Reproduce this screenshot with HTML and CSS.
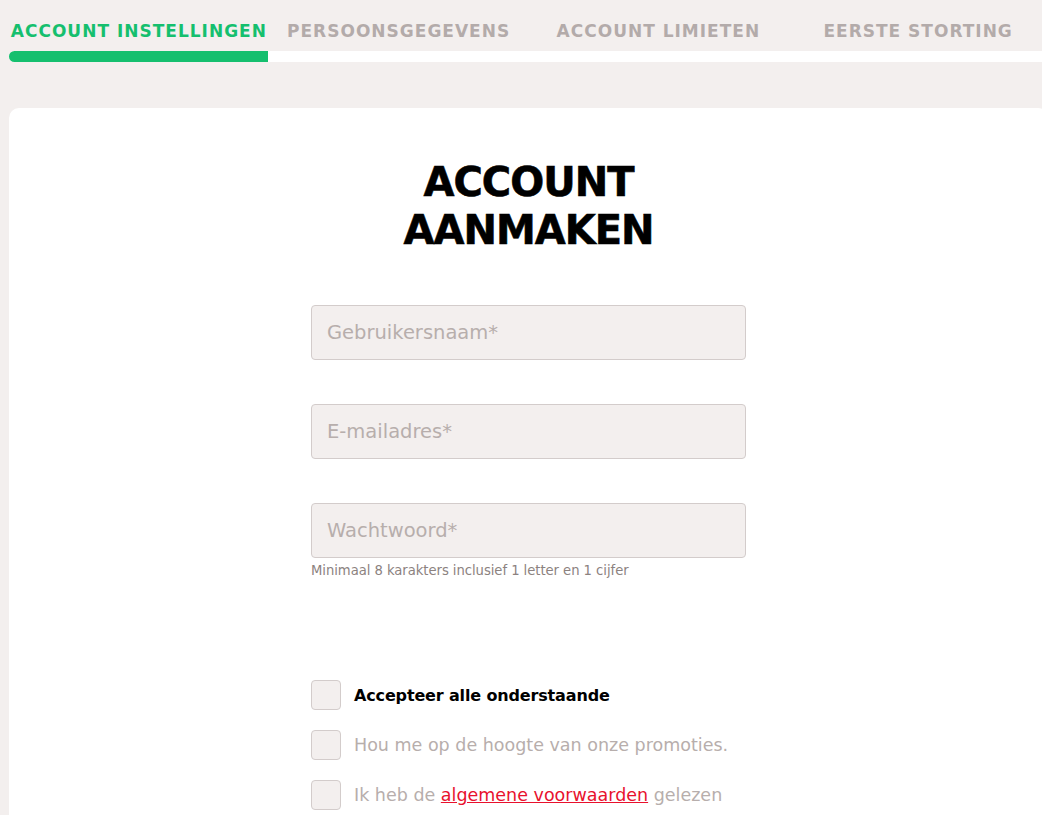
FILE: index.html
```html
<!DOCTYPE html>
<html lang="nl">
<head>
<meta charset="utf-8">
<title>Account aanmaken</title>
<link rel="stylesheet" href="styles.css">
</head>
<body>
<div class="wrap">
  <nav class="tabs">
    <div class="tab active">ACCOUNT INSTELLINGEN</div>
    <div class="tab">PERSOONSGEGEVENS</div>
    <div class="tab">ACCOUNT LIMIETEN</div>
    <div class="tab">EERSTE STORTING</div>
  </nav>
  <div class="progress"><div class="fill"></div></div>
  <main class="card">
    <h1 class="title">ACCOUNT<br>AANMAKEN</h1>
    <form class="form">
      <div class="field"><input class="input" type="text" placeholder="Gebruikersnaam*"></div>
      <div class="field"><input class="input" type="email" placeholder="E-mailadres*"></div>
      <div class="field">
        <input class="input" type="password" placeholder="Wachtwoord*">
        <div class="hint">Minimaal 8 karakters inclusief 1 letter en 1 cijfer</div>
      </div>
      <div class="checks">
        <label class="check"><span class="box"></span><span class="label strong">Accepteer alle onderstaande</span></label>
        <label class="check"><span class="box"></span><span class="label">Hou me op de hoogte van onze promoties.</span></label>
        <label class="check"><span class="box"></span><span class="label">Ik heb de <a class="link" href="#">algemene voorwaarden</a> gelezen</span></label>
      </div>
    </form>
  </main>
</div>
</body>
</html>
```
FILE: styles.css
```css
html, body {
  margin: 0;
  padding: 0;
}
body {
  background: #f3efee;
  font-family: "DejaVu Sans", "Liberation Sans", sans-serif;
  overflow: hidden;
  width: 1042px;
  height: 815px;
}
.wrap {
  margin-left: 9px;
  width: 1039px;
}
.tabs {
  display: grid;
  grid-template-columns: repeat(4, 1fr);
  height: 51px;
  align-items: center;
  padding-top: 10px;
  box-sizing: border-box;
}
.tab {
  text-align: center;
  font-weight: bold;
  font-size: 17px;
  letter-spacing: 1px;
  color: #b3abaa;
  white-space: nowrap;
}
.tab.active {
  color: #15bf6e;
}
.progress {
  height: 11px;
  background: #ffffff;
  border-radius: 6px 0 0 6px;
  overflow: hidden;
}
.fill {
  width: 259px;
  height: 100%;
  background: #15bf6e;
}
.card {
  margin-top: 46px;
  background: #ffffff;
  border-radius: 10px 10px 0 0;
  padding-top: 50px;
  height: 657px;
}
.title {
  margin: 0;
  text-align: center;
  font-size: 40px;
  line-height: 48px;
  font-weight: bold;
  letter-spacing: -1px;
  color: #000;
  -webkit-text-stroke: 0.6px #000;
}
.form {
  width: 435px;
  margin: 51px auto 0;
}
.field {
  margin-bottom: 44px;
}
.input {
  display: block;
  width: 100%;
  height: 55px;
  box-sizing: border-box;
  border: 1px solid #d3cccb;
  border-radius: 4px;
  background: #f3efee;
  padding: 0 15px;
  font-family: inherit;
  font-size: 19.5px;
  color: #333;
  outline: none;
}
.input::placeholder {
  color: #b7aeac;
}
.hint {
  margin-top: 5px;
  font-size: 13.2px;
  letter-spacing: -0.05px;
  color: #8c8280;
}
.field:nth-child(3) {
  margin-bottom: 0;
}
.checks {
  margin-top: 102px;
  display: flex;
  flex-direction: column;
  gap: 20px;
}
.check {
  display: flex;
  align-items: center;
  gap: 13px;
}
.box {
  width: 30px;
  height: 30px;
  box-sizing: border-box;
  border: 1px solid #d3cccb;
  border-radius: 4px;
  background: #f3efee;
  flex: none;
}
.label {
  font-size: 17.5px;
  color: #b7aeac;
}
.label.strong {
  font-weight: bold;
  font-size: 16px;
  letter-spacing: -0.15px;
  color: #000;
}
.link {
  color: #e8112d;
  text-decoration: underline;
}
```
